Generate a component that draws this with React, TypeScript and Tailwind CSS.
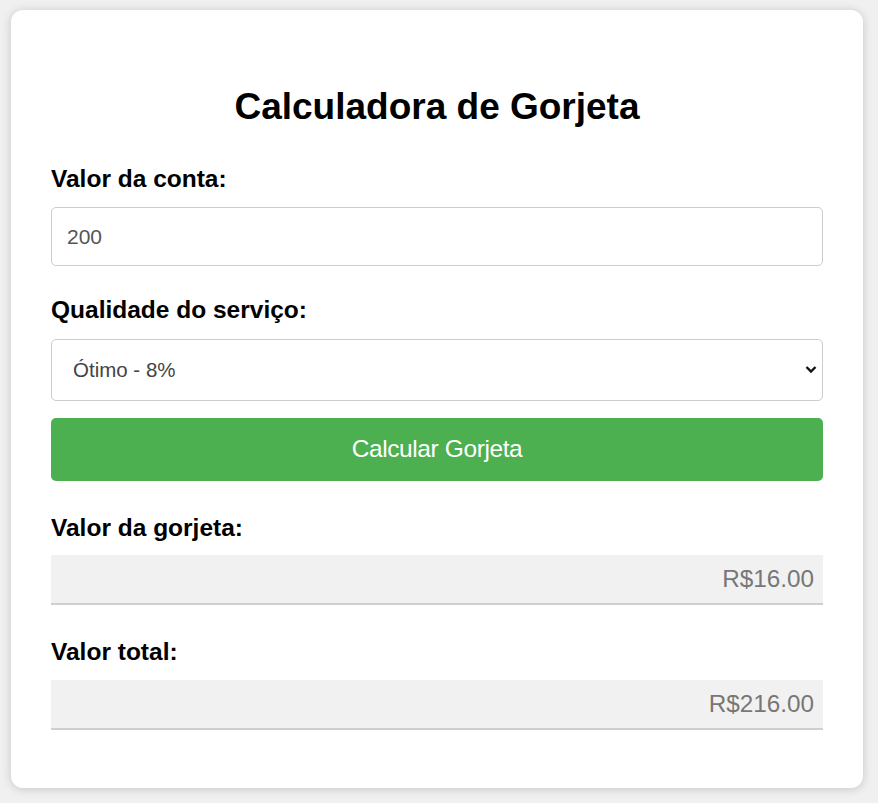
import { useState } from "react";

export default function App() {
  const [conta, setConta] = useState("200");
  const [pct, setPct] = useState("0.08");
  const [gorjeta, setGorjeta] = useState("R$16.00");
  const [total, setTotal] = useState("R$216.00");

  function calcular() {
    const v = parseFloat(conta) || 0;
    const g = v * parseFloat(pct);
    setGorjeta(`R$${g.toFixed(2)}`);
    setTotal(`R$${(v + g).toFixed(2)}`);
  }

  return (
    <main className="min-h-[803px] bg-[#f0f0f0] pt-[10px] pb-[15px] font-['Liberation_Sans',Arial,sans-serif]">
      <div className="ml-[11px] w-[852px] h-[778px] bg-white rounded-[12px] shadow-[0_1px_10px_rgba(0,0,0,0.18)] px-[40px] pt-[78px]">
        <h1 className="text-center text-[37px] leading-[37px] font-bold text-black">
          Calculadora de Gorjeta
        </h1>

        <label className="block mt-[42px] text-[24.5px] leading-[23px] font-bold text-black">
          Valor da conta:
        </label>
        <input
          type="number"
          value={conta}
          onChange={(e) => setConta(e.target.value)}
          className="mt-[17px] block w-full h-[59px] border border-[#cccccc] rounded-[5px] px-[15px] text-[21px] text-[#555] outline-none [appearance:textfield]"
        />

        <label className="block mt-[32px] text-[24.5px] leading-[23px] font-bold text-black">
          Qualidade do serviço:
        </label>
        <div className="relative mt-[18px]">
          <select
            value={pct}
            onChange={(e) => setPct(e.target.value)}
            className="block w-full h-[62px] appearance-none border border-[#cccccc] rounded-[5px] bg-white pl-[21px] text-[20.5px] text-[#444] outline-none"
          >
            <option value="0.2">Excelente - 20%</option>
            <option value="0.15">Muito bom - 15%</option>
            <option value="0.1">Bom - 10%</option>
            <option value="0.08">Ótimo - 8%</option>
            <option value="0.05">Regular - 5%</option>
          </select>
          <svg
            className="absolute right-[6px] top-[26px] pointer-events-none"
            width="12"
            height="9"
            viewBox="0 0 12 9"
          >
            <path d="M1.5 2 L6 6.5 L10.5 2" fill="none" stroke="#111" strokeWidth="2.4" />
          </svg>
        </div>

        <button
          onClick={calcular}
          className="mt-[17px] block w-full h-[63px] rounded-[5px] bg-[#4caf50] text-white text-[24.5px] tracking-[-0.4px]"
        >
          Calcular Gorjeta
        </button>

        <label className="block mt-[35px] text-[24.5px] leading-[23px] font-bold text-black">
          Valor da gorjeta:
        </label>
        <div className="mt-[16px] h-[50px] bg-[#f1f1f1] border-b-2 border-[#cfcfcf] flex items-center justify-end pr-[9px] text-[24.3px] text-[#777]">
          {gorjeta}
        </div>

        <label className="block mt-[35px] text-[24.5px] leading-[23px] font-bold text-black">
          Valor total:
        </label>
        <div className="mt-[17px] h-[50px] bg-[#f1f1f1] border-b-2 border-[#cfcfcf] flex items-center justify-end pr-[9px] text-[24.3px] text-[#777]">
          {total}
        </div>
      </div>
    </main>
  );
}
